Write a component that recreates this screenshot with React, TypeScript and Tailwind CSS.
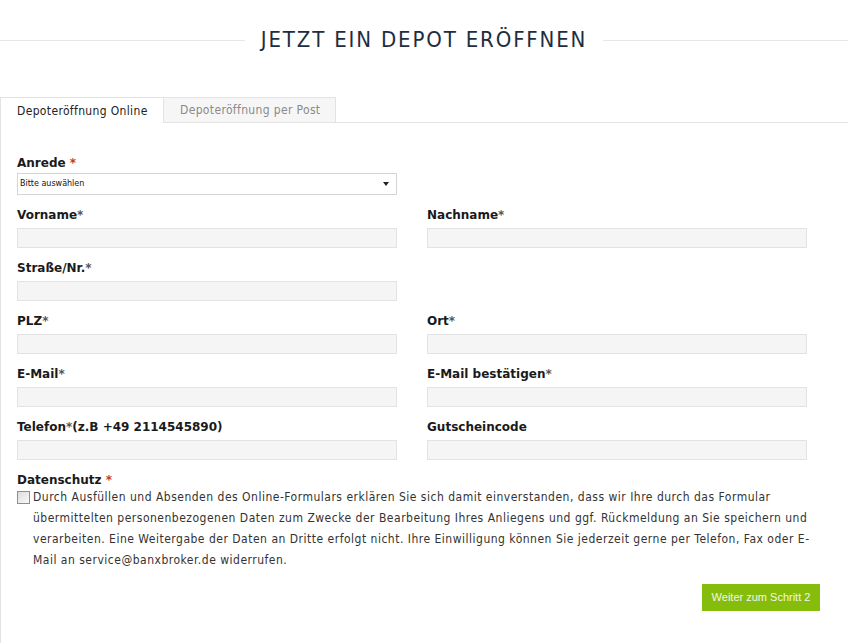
import React from 'react';

const body = { fontFamily: '"DejaVu Sans Condensed", "DejaVu Sans", sans-serif' };
const bold = { fontFamily: '"DejaVu Sans", Verdana, sans-serif' };

function Field({ label, star = '*', extra = '' }: { label: string; star?: string; extra?: string }) {
  return (
    <div className="mb-[12px]">
      <div className="h-[16px] text-[12px] font-bold leading-[16px] text-[#1a1a1a]" style={bold}>
        {label}
        <span className="text-[#555]">{star}</span>
        {extra}
      </div>
      <div className="mt-[5px] h-[20px] w-[380px] border border-[#e3e3e3] bg-[#f5f5f5]" />
    </div>
  );
}

export default function App() {
  return (
    <div className="min-h-[643px] w-[848px] bg-white text-[#333]" style={body}>
      {/* Title */}
      <div className="flex items-center pt-[28px]">
        <div className="h-px flex-1 bg-[#e6e6e6]" />
        <h1 className="px-[16px] text-[22px] leading-[24px] tracking-[1.85px] text-[#1e2d40]">JETZT EIN DEPOT ERÖFFNEN</h1>
        <div className="h-px flex-1 bg-[#e6e6e6]" />
      </div>

      {/* Tabs */}
      <div className="mt-[45px] flex h-[26px] text-[12px] tracking-[0.35px]">
        <div className="flex w-[163px] items-center border-l border-t border-[#e3e3e3] pl-[16px] text-[#222]">
          Depoteröffnung Online
        </div>
        <div className="flex w-[173px] items-center border border-[#e3e3e3] bg-[#f6f6f6] pl-[16px] text-[#8a8a8a]">
          Depoteröffnung per Post
        </div>
        <div className="flex-1 border-b border-[#e3e3e3]" />
      </div>

      {/* Panel */}
      <div className="border-l border-[#e3e3e3] pb-[32px] pl-[16px] pt-[32px]">
        <div className="mb-[12px]">
          <div className="h-[16px] text-[12px] font-bold leading-[16px] text-[#1a1a1a]" style={bold}>
            Anrede <span className="text-[#c0392b]">*</span>
          </div>
          <div className="mt-[2px] flex h-[22px] w-[380px] items-center justify-between border border-[#d5d5d5] bg-white pl-[2px] pr-[7px]">
            <span className="text-[8px] text-[#111]" style={{ fontFamily: '"DejaVu Sans", sans-serif' }}>Bitte auswählen</span>
            <span className="h-0 w-0 border-x-[3px] border-t-[4px] border-x-transparent border-t-[#222]" />
          </div>
        </div>

        <div className="grid w-[790px] grid-cols-[380px_380px] gap-x-[30px]">
          <Field label="Vorname" />
          <Field label="Nachname" />
          <Field label="Straße/Nr." />
          <div />
          <Field label="PLZ" />
          <Field label="Ort" />
          <Field label="E-Mail" />
          <Field label="E-Mail bestätigen" />
          <Field label="Telefon" extra="(z.B +49 2114545890)" />
          <Field label="Gutscheincode" star="" />
        </div>

        <div className="w-[803px]">
          <div className="h-[16px] text-[12px] font-bold leading-[16px] text-[#1a1a1a]" style={bold}>
            Datenschutz <span className="text-[#c0392b]">*</span>
          </div>
          <div className="mt-[-1px] flex text-[12px] leading-[21px] tracking-[0.5px] text-[#333]">
            <span className="mr-[3px] mt-[4px] h-[13px] w-[13px] shrink-0 border border-[#8f8f8f] bg-gradient-to-br from-[#dcdcdc] to-[#fafafa]" />
            <p>
              Durch Ausfüllen und Absenden des Online-Formulars erklären Sie sich damit einverstanden, dass wir Ihre durch das Formular übermittelten personenbezogenen Daten zum Zwecke der Bearbeitung Ihres Anliegens und ggf. Rückmeldung an Sie speichern und verarbeiten. Eine Weitergabe der Daten an Dritte erfolgt nicht. Ihre Einwilligung können Sie jederzeit gerne per Telefon, Fax oder E-Mail an service@banxbroker.de widerrufen.
            </p>
          </div>
          <div className="mt-[13px] flex justify-end">
            <button
              className="h-[27px] w-[118px] bg-[#86bc0b] text-[11px] text-[#f2f8e6]"
              style={{ fontFamily: '"Liberation Sans", Arial, sans-serif' }}
            >
              Weiter zum Schritt 2
            </button>
          </div>
        </div>
      </div>
    </div>
  );
}
